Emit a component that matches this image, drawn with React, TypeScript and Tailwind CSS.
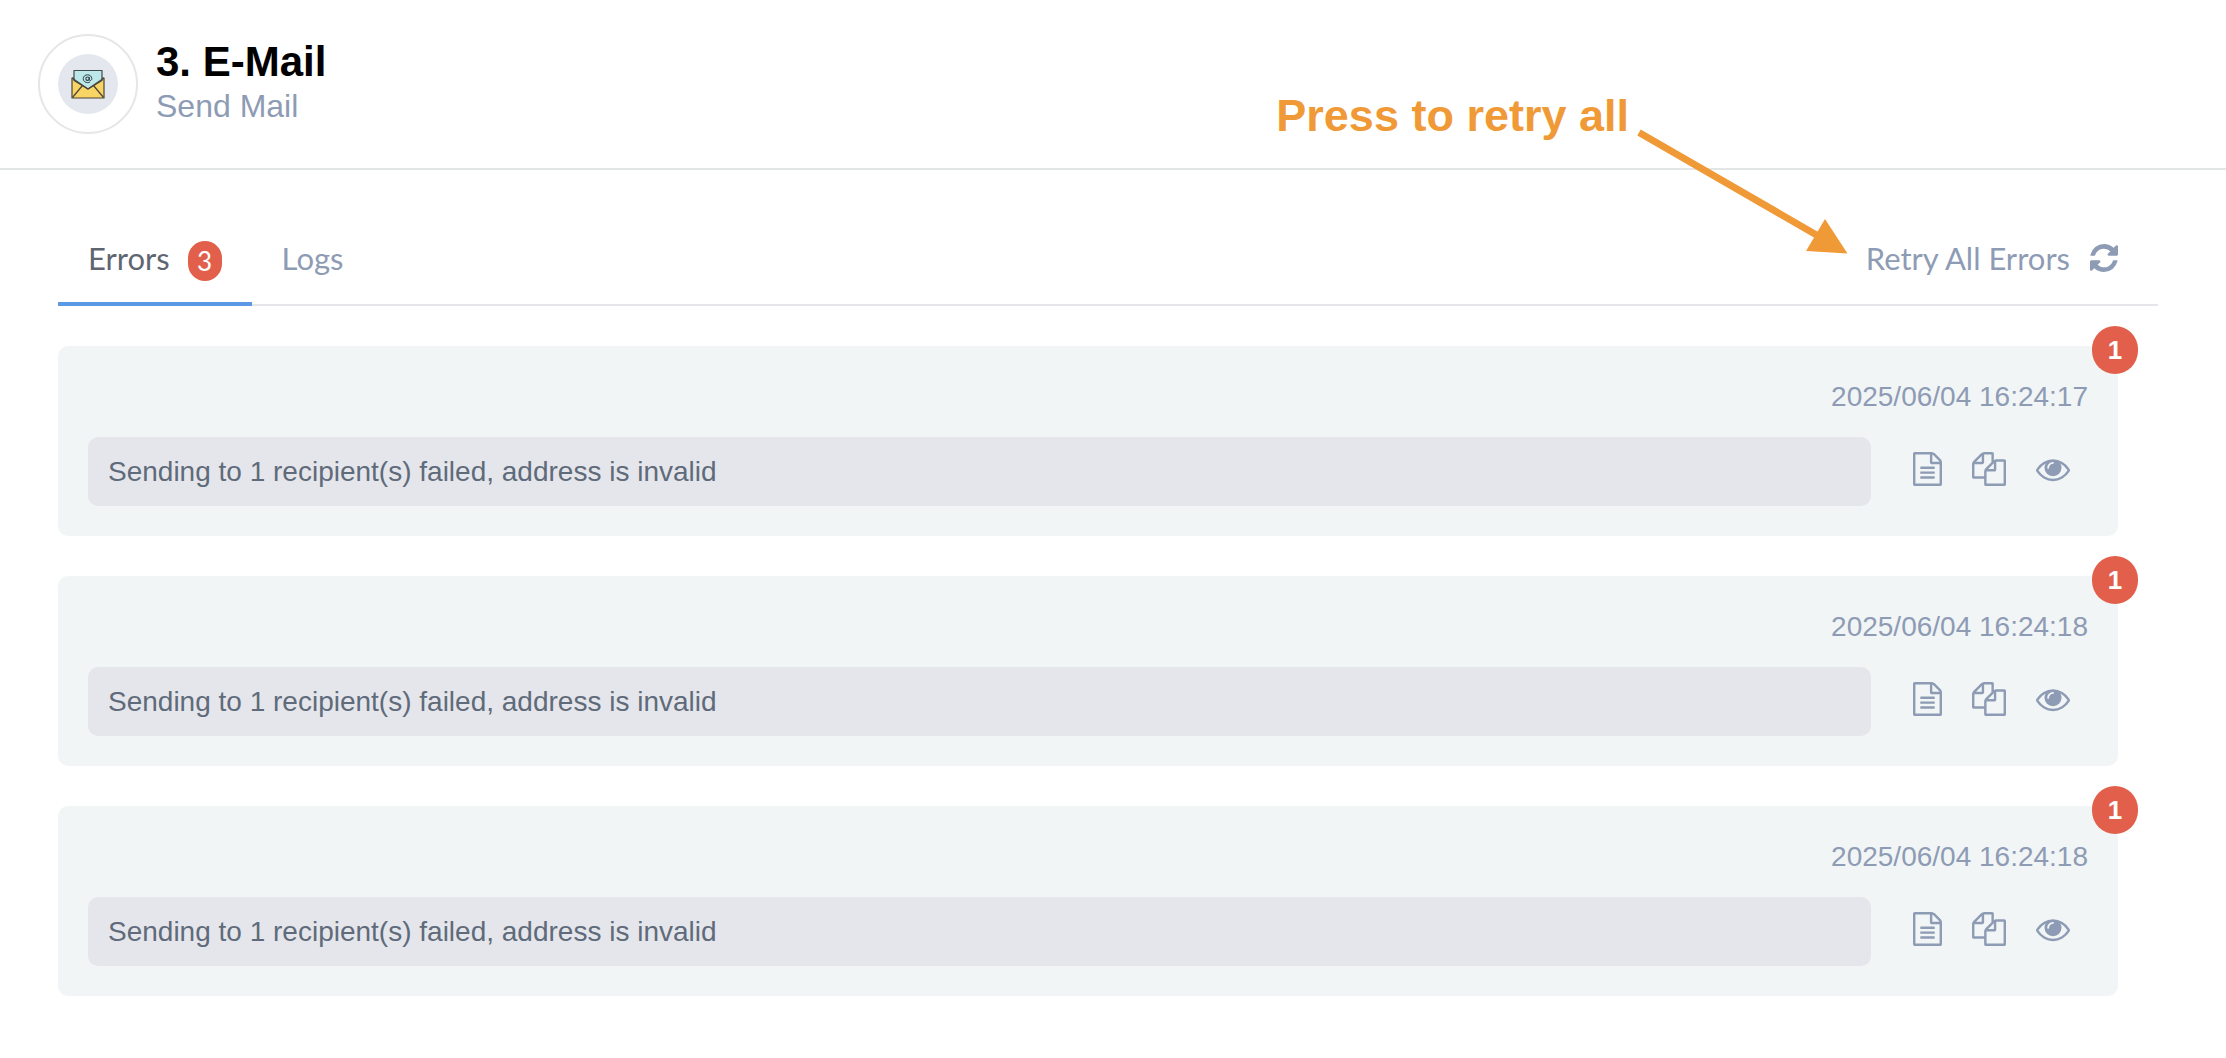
import React from "react";

const errors = [
  { time: "2025/06/04 16:24:17", message: "Sending to 1 recipient(s) failed, address is invalid", count: 1 },
  { time: "2025/06/04 16:24:18", message: "Sending to 1 recipient(s) failed, address is invalid", count: 1 },
  { time: "2025/06/04 16:24:18", message: "Sending to 1 recipient(s) failed, address is invalid", count: 1 },
];

function MailIcon() {
  return (
    <svg viewBox="0 0 34 30" className="h-[30px] w-[34px]" aria-hidden="true" strokeLinejoin="round">
      <path d="M1 9h32v20H1z" fill="#f8d465" stroke="#4a4438" strokeWidth="1.2" />
      <path d="M3 1.500h28v10L17 20 3 11.500z" fill="#bde8ea" stroke="#3e4a4c" strokeWidth="1.2" />
      <path d="M1 9 17 20 33 9M1.500 28.500 11.500 16.500M32.500 28.500 22.500 16.500" fill="none" stroke="#4a4438" strokeWidth="1.2" />
      <circle cx="16.500" cy="9.700" r="1.700" fill="none" stroke="#2f4347" strokeWidth="1.1" />
      <path d="M18.300 8v2.500c0 1.500 2.500 1.400 2.500-.8 0-2.300-1.900-3.900-4.300-3.900s-4.300 1.700-4.300 3.900 1.900 3.900 4.300 3.900c1 0 1.800-.2 2.500-.6" fill="none" stroke="#2f4347" strokeWidth="1" />
    </svg>
  );
}

function RefreshIcon() {
  return (
    <svg viewBox="128 128 1536 1536" className="size-7" fill="currentColor" aria-hidden="true">
      <path d="M1639 1056q0 5-1 7-64 268-268 434.5t-478 166.5q-146 0-282.5-55t-243.5-157l-129 129q-19 19-45 19t-45-19-19-45v-448q0-26 19-45t45-19h448q26 0 45 19t19 45-19 45l-137 137q71 66 161 102t187 36q134 0 250-65t186-179q11-17 53-117 8-23 30-23h192q13 0 22.5 9.5t9.5 22.5zm25-800v448q0 26-19 45t-45 19h-448q-26 0-45-19t-19-45 19-45l138-138q-148-137-349-137-134 0-250 65t-186 179q-11 17-53 117-8 23-30 23h-199q-13 0-22.5-9.5t-9.5-22.5v-7q65-268 270-434.5t480-166.5q146 0 284 55.5t245 156.5l130-129q19-19 45-19t45 19 19 45z" />
    </svg>
  );
}

function FileIcon() {
  return (
    <svg viewBox="128 0 1536 1792" className="h-[34px] w-[29px]" fill="currentColor" aria-hidden="true">
      <path d="M1596 380q28 28 48 76t20 88v1152q0 40-28 68t-68 28h-1344q-40 0-68-28t-28-68v-1600q0-40 28-68t68-28h896q40 0 88 20t76 48zm-444-244v376h376q-10-29-22-41l-313-313q-12-12-41-22zm384 1528v-1024h-416q-40 0-68-28t-28-68v-416h-768v1536h1280zm-1024-864q0-14 9-23t23-9h704q14 0 23 9t9 23v64q0 14-9 23t-23 9h-704q-14 0-23-9t-9-23v-64zm736 224q14 0 23 9t9 23v64q0 14-9 23t-23 9h-704q-14 0-23-9t-9-23v-64q0-14 9-23t23-9h704zm0 256q14 0 23 9t9 23v64q0 14-9 23t-23 9h-704q-14 0-23-9t-9-23v-64q0-14 9-23t23-9h704z" />
    </svg>
  );
}

function CopyIcon() {
  return (
    <svg viewBox="0 0 1792 1792" className="size-[34px]" fill="currentColor" aria-hidden="true">
      <path d="M1696 384q40 0 68 28t28 68v1216q0 40-28 68t-68 28h-960q-40 0-68-28t-28-68v-288h-544q-40 0-68-28t-28-68v-672q0-40 20-88t48-76l408-408q28-28 76-48t88-20h416q40 0 68 28t28 68v328q68-40 128-40h416zm-544 213l-299 299h299v-299zm-640-384l-299 299h299v-299zm196 647l316-316v-416h-384v416q0 40-28 68t-68 28h-416v640h512v-256q0-40 20-88t48-76zm956 804v-1152h-384v416q0 40-28 68t-68 28h-416v640h896z" />
    </svg>
  );
}

function EyeIcon() {
  return (
    <svg viewBox="0 0 1792 1792" className="size-[34px]" fill="currentColor" aria-hidden="true">
      <path d="M1664 960q-152-236-381-353 61 104 61 225 0 185-131.5 316.5t-316.5 131.5-316.5-131.5-131.5-316.5q0-121 61-225-229 117-381 353 133 205 333.5 326.5t434.5 121.5 434.5-121.5 333.5-326.5zm-720-384q0-20-14-34t-34-14q-125 0-214.5 89.5t-89.5 214.5q0 20 14 34t34 14 34-14 14-34q0-86 61-147t147-61q20 0 34-14t14-34zm848 384q0 34-20 69-140 230-376.5 368.5t-499.5 138.5-499.5-139-376.5-368q-20-35-20-69t20-69q140-229 376.5-368t499.5-139 499.5 139 376.5 368q20 35 20 69z" />
    </svg>
  );
}

function ErrorCard({ time, message, count }: { time: string; message: string; count: number }) {
  return (
    <li className="relative rounded-[10px] bg-[#f1f5f6] p-[30px]">
      <span className="absolute -top-5 -right-5 flex h-12 w-[46px] items-center justify-center rounded-full bg-[#e2604b] text-[26px] font-bold text-white">
        {count}
      </span>
      <time className="block h-[61px] text-right text-[28px] leading-[42px] text-[#8e9bb4]">{time}</time>
      <div className="flex items-center gap-[42px]">
        <p className="min-w-0 flex-1 rounded-[10px] bg-[#e5e6eb] px-5 py-[14px] text-[28px] leading-[41px] text-[#5f6b7a]">
          {message}
        </p>
        <div className="flex gap-[30px] pr-[18px] pb-1.5 text-[#8e9bb4]">
          <button type="button" aria-label="Show log"><FileIcon /></button>
          <button type="button" aria-label="Copy"><CopyIcon /></button>
          <button type="button" aria-label="View details"><EyeIcon /></button>
        </div>
      </div>
    </li>
  );
}

export default function App() {
  return (
    <main className="relative min-h-screen bg-white font-['Liberation_Sans',Arial,sans-serif]">
      <header className="flex items-start gap-[18px] border-b-2 border-[#e3e6e7] px-[38px] pt-[34px] pb-[34px]">
        <div className="flex size-[100px] items-center justify-center rounded-full border-2 border-[#e5e6e8]">
          <div className="flex size-[60px] items-center justify-center rounded-full bg-[#e4e8ee]">
            <MailIcon />
          </div>
        </div>
        <div className="pt-1">
          <h1 className="text-[42px] leading-[48px] font-bold text-black">3. E-Mail</h1>
          <p className="text-[32px] leading-10 text-[#8e9bb4]">Send Mail</p>
        </div>
      </header>

      <section className="pt-14 pr-[68px] pl-[58px]">
        <nav className="flex h-20 border-b-2 border-[#e4e6ea] font-[Lato,'PT_Sans',sans-serif] text-[31px] text-[#8e9bb4]">
          <button type="button" className="-mb-0.5 flex items-center gap-[18px] border-b-4 border-[#5b98e6] px-[30px] pb-1.5">
            <span className="pb-1.5 text-[#5f6672]">Errors</span>
            <span className="flex h-10 w-[34px] items-center justify-center rounded-full bg-[#e2604b] text-[26px] text-white">3</span>
          </button>
          <button type="button" className="px-[30px] pb-[14px]">Logs</button>
          <button type="button" className="ml-auto flex items-center gap-5 pr-10 pb-[14px]">
            Retry All Errors
            <RefreshIcon />
          </button>
        </nav>

        <ul className="flex flex-col gap-10 pt-10 pr-10 pb-10">
          {errors.map((error, index) => (
            <ErrorCard key={index} {...error} />
          ))}
        </ul>
      </section>

      <div className="pointer-events-none absolute top-[90px] right-[378px] flex items-start gap-2 text-[#f09a37]">
        <strong className="text-[45px] leading-[52px] font-bold whitespace-nowrap">Press to retry all</strong>
        <svg viewBox="1637 90 211 164" className="h-[164px] w-[211px]" aria-hidden="true">
          <path d="M1639 132.500 1820 237" stroke="currentColor" strokeWidth="7" />
          <path d="M1825 219 1847.500 253.500 1806 251z" fill="currentColor" />
        </svg>
      </div>
    </main>
  );
}
